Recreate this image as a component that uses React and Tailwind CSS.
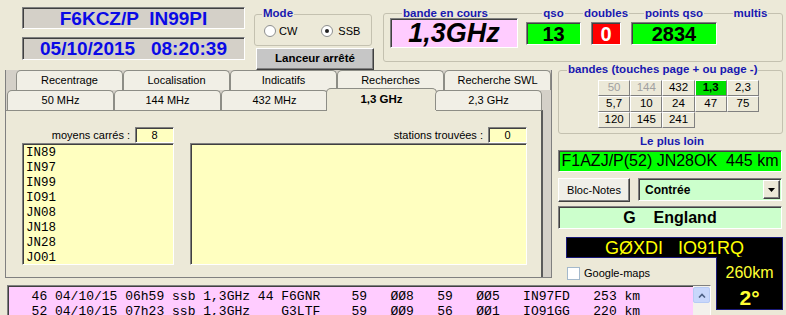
const sunken =
  'border border-t-[#808080] border-l-[#808080] border-b-white border-r-white shadow-[inset_1px_1px_0_#404040]';
const raised =
  'border border-t-white border-l-white border-b-[#404040] border-r-[#404040] shadow-[inset_-1px_-1px_0_#808080]';

const backTabs = ['Recentrage', 'Localisation', 'Indicatifs', 'Recherches', 'Recherche SWL'];
const frontTabs = ['50 MHz', '144 MHz', '432 MHz', '1,3 GHz', '2,3 GHz'];
const squares = ['IN89', 'IN97', 'IN99', 'IO91', 'JN08', 'JN18', 'JN28', 'JO01'];
const bands = [
  { l: '50', off: true },
  { l: '144', off: true },
  { l: '432' },
  { l: '1,3', on: true },
  { l: '2,3' },
  { l: '5,7' },
  { l: '10' },
  { l: '24' },
  { l: '47' },
  { l: '75' },
  { l: '120' },
  { l: '145' },
  { l: '241' },
];
const logRows = [
  '  46 04/10/15 06h59 ssb 1,3GHz 44 F6GNR    59   ØØ8   59   ØØ5   IN97FD   253 km',
  '  52 04/10/15 07h23 ssb 1,3GHz    G3LTF    59   ØØ9   56   ØØ1   IO91GG   220 km',
];

function Radio({ checked }) {
  return (
    <span className="w-[12px] h-[12px] rounded-full border border-[#8e8f8f] bg-white flex items-center justify-center">
      {checked && <span className="w-[4px] h-[4px] rounded-full bg-[#222]" />}
    </span>
  );
}

function Legend({ children, className = '' }) {
  return (
    <span
      className={`h-[10px] leading-[10px] -mt-[6px] px-[1px] bg-[#ECE9D8] text-[11.5px] font-bold text-[#1818b0] whitespace-nowrap ${className}`}
    >
      {children}
    </span>
  );
}

export default function App() {
  return (
    <div className="w-[786px] h-[315px] overflow-hidden bg-[#ECE9D8] text-black font-['Liberation_Sans',Arial,sans-serif] grid grid-cols-[555px_161px_70px] grid-rows-[62px_196px_27px_30px]">
      {/* top bar */}
      <div className="col-span-3 flex items-start">
        <div className="ml-[22px] mt-[7px] w-[223px] flex flex-col gap-[8px]">
          <div
            className={`h-[22px] bg-[#D4D0C8] ${sunken} flex items-center justify-center text-[19px] leading-none font-bold text-[#0a0ae6] whitespace-pre`}
          >
            F6KCZ/P  IN99PI
          </div>
          <div
            className={`h-[23px] bg-[#D4D0C8] ${sunken} flex items-center justify-center text-[19px] leading-none font-bold text-[#0a0ae6] whitespace-pre`}
          >
            05/10/2015   08:20:39
          </div>
        </div>

        <div className="ml-[9px] mt-[14px] w-[120px] flex flex-col">
          <div className="w-[118px] h-[32px] border border-[#c4c1b0] rounded-[3px] flex flex-col">
            <Legend className="ml-[7px] w-fit -mt-[7px]">Mode</Legend>
            <div className="mt-[5px] ml-[9px] flex items-center text-[11px]">
              <Radio />
              <span className="ml-[3px]">CW</span>
              <span className="ml-[24px]">
                <Radio checked />
              </span>
              <span className="ml-[5px]">SSB</span>
            </div>
          </div>
          <div
            className={`mt-[2px] ml-[2px] w-[118px] h-[22px] bg-[#c6c6c6] ${raised} flex items-center justify-center text-[11.5px] font-bold`}
          >
            Lanceur arrêté
          </div>
        </div>

        <div className="ml-[9px] mt-[13px] w-[400px] h-[49px] border border-[#c4c1b0] rounded-[3px] flex items-start">
          <div className="ml-[6px] w-[128px] flex flex-col">
            <Legend className="ml-[12px] w-fit">bande en cours</Legend>
            <div
              className={`h-[30px] bg-[#ffccff] ${sunken} flex items-center justify-center text-[27px] leading-none font-bold italic`}
            >
              1,3GHz
            </div>
          </div>
          <div className="ml-[8px] w-[55px] flex flex-col items-center">
            <Legend>qso</Legend>
            <div
              className={`mt-[4px] w-full h-[23px] bg-[#00ff00] ${sunken} flex items-center justify-center text-[20px] leading-none font-bold`}
            >
              13
            </div>
          </div>
          <div className="ml-[1px] w-[48px] flex flex-col items-center">
            <Legend>doubles</Legend>
            <div
              className={`mt-[4px] w-[30px] h-[23px] bg-[#ff0000] ${sunken} flex items-center justify-center text-[20px] leading-none font-bold text-white`}
            >
              0
            </div>
          </div>
          <div className="ml-[1px] w-[86px] flex flex-col items-center">
            <Legend>points qso</Legend>
            <div
              className={`mt-[4px] w-full h-[23px] bg-[#00ff00] ${sunken} flex items-center justify-center text-[20px] leading-none font-bold`}
            >
              2834
            </div>
          </div>
          <div className="ml-[16px] w-[35px] flex flex-col items-center">
            <Legend>multis</Legend>
          </div>
        </div>
      </div>

      {/* tab control */}
      <div className="row-span-2 pt-[8px] pl-[5px]">
        <div className="w-[547px] h-[208px] bg-[#D4D0C8] border-l border-r border-b border-[#808080] flex flex-col text-[11px]">
          <div className="flex pl-[10px] h-[20px]">
            {backTabs.map((t) => (
              <div
                key={t}
                className="w-[107px] h-[20px] rounded-t-[5px] border border-b-0 border-[#8d8d86] bg-[#f1efe6] flex items-center justify-center"
              >
                {t}
              </div>
            ))}
          </div>
          <div className="flex pl-[1px] h-[20px] relative z-10">
            {frontTabs.map((t, i) =>
              i === 3 ? (
                <div
                  key={t}
                  className="-mx-[2px] -mt-[2px] w-[111px] h-[23px] rounded-t-[5px] border border-b-0 border-[#8d8d86] bg-[#ECE9D8] flex items-center justify-center font-bold text-[11.5px]"
                >
                  {t}
                </div>
              ) : (
                <div
                  key={t}
                  className="w-[107px] h-[20px] rounded-t-[5px] border border-b-0 border-[#8d8d86] bg-[#f1efe6] flex items-center justify-center"
                >
                  {t}
                </div>
              ),
            )}
          </div>
          <div className="w-[537px] flex-1 bg-[#ECE9D8] border-t border-r-2 border-[#8d8d86] border-r-[#5a5a5a] flex items-start pt-[16px] pl-[16px]">
            <div className="w-[152px] flex flex-col">
              <div className="h-[16px] flex items-center justify-end">
                <span>moyens carrés :</span>
                <span className={`ml-[5px] w-[39px] h-[16px] bg-[#ffffc0] ${sunken} flex items-center justify-center`}>
                  8
                </span>
              </div>
              <div
                className={`h-[122px] bg-[#ffffc0] ${sunken} pt-[2px] pl-[3px] font-['Liberation_Mono',monospace] text-[12.5px] leading-[15px]`}
              >
                {squares.map((s) => (
                  <div key={s}>{s}</div>
                ))}
              </div>
            </div>
            <div className="ml-[16px] w-[337px] flex flex-col">
              <div className="h-[16px] flex items-center justify-end">
                <span>stations trouvées :</span>
                <span className={`ml-[5px] w-[39px] h-[16px] bg-[#ffffc0] ${sunken} flex items-center justify-center`}>
                  0
                </span>
              </div>
              <div className={`h-[122px] bg-[#ffffc0] ${sunken}`} />
            </div>
          </div>
        </div>
      </div>

      {/* right column */}
      <div className="col-span-2 flex flex-col pl-[3px]">
        <div className="mt-[8px] w-[225px] h-[64px] border border-[#c4c1b0] rounded-[3px] flex flex-col">
          <Legend className="ml-[8px] w-fit -mt-[7px]">bandes (touches page + ou page -)</Legend>
          <div className="mt-[6px] ml-[39px] w-[161px] grid grid-cols-5 text-[11.5px]">
            {bands.map((b) => (
              <div
                key={b.l}
                className={`h-[16px] border border-t-white border-l-white border-b-[#808080] border-r-[#808080] flex items-center justify-center ${
                  b.on ? 'bg-[#00e000] font-bold' : 'bg-[#ECE9D8]'
                } ${b.off ? 'text-[#a0a0a0]' : ''}`}
              >
                {b.l}
              </div>
            ))}
          </div>
        </div>
        <div className="h-[14px] leading-[14px] text-center text-[11.5px] font-bold text-[#1818b0]">Le plus loin</div>
        <div
          className={`mt-[2px] w-[224px] h-[22px] bg-[#00ff00] ${sunken} flex items-center justify-center text-[16px] leading-none whitespace-pre`}
        >
          F1AZJ/P(52) JN28OK  445 km
        </div>
        <div className="mt-[6px] flex items-start">
          <div
            className={`w-[72px] h-[24px] bg-[#f0efe8] ${raised} flex items-center justify-center text-[11px]`}
          >
            Bloc-Notes
          </div>
          <div className={`ml-[8px] w-[144px] h-[23px] bg-[#ccffcc] ${sunken} flex items-center`}>
            <span className="flex-1 pl-[6px] text-[12px] font-bold">Contrée</span>
            <span
              className={`mr-[1px] w-[17px] h-[19px] bg-[#ECE9D8] ${raised} flex items-center justify-center`}
            >
              <svg width="7" height="4" viewBox="0 0 7 4">
                <path d="M0 0h7L3.5 4z" fill="#000" />
              </svg>
            </span>
          </div>
        </div>
        <div
          className={`mt-[4px] w-[224px] h-[23px] bg-[#ccffcc] ${sunken} flex items-center justify-center text-[16px] leading-none font-bold whitespace-pre`}
        >
          G    England
        </div>
        <div className="mt-[8px] ml-[8px] w-[217px] h-[21px] bg-black border border-[#1a1a78] flex items-center justify-center text-[18px] leading-none text-[#ffff00] whitespace-pre">
          GØXDI   IO91RQ
        </div>
      </div>

      {/* google maps checkbox */}
      <div className="pl-[12px] pt-[9px] flex items-start text-[11px]">
        <span className="w-[13px] h-[13px] bg-white border border-[#1c5180]/40" />
        <span className="ml-[4px] leading-[13px]">Google-maps</span>
      </div>

      {/* distance / bearing */}
      <div className="row-span-2">
        <div className="-mt-[1px] w-[67px] h-[53px] bg-black border border-t-0 border-[#1a1a78] flex flex-col items-center text-[#ffff33]">
          <span className="mt-[8px] text-[16px] leading-none">260km</span>
          <span className="mt-[6px] text-[21px] leading-none font-bold">2°</span>
        </div>
      </div>

      {/* log */}
      <div className="col-span-2 row-start-4 pl-[7px]">
        <div className={`w-[704px] h-[40px] bg-[#ffccff] ${sunken} flex`}>
          <div className="flex-1 pt-[3px] pl-[8px] font-['Liberation_Mono',monospace] text-[13px] leading-[15px] whitespace-pre">
            {logRows.map((r) => (
              <div key={r}>{r}</div>
            ))}
          </div>
          <div className="w-[17px] bg-[#f3f1ec] flex flex-col">
            <div className="mt-[1px] h-[16px] rounded-[2px] border border-[#b7cbf5] bg-[#c8d7fb] flex items-center justify-center">
              <svg width="8" height="5" viewBox="0 0 8 5">
                <path d="M1 4.5L4 1.5L7 4.5" stroke="#4d6185" strokeWidth="1.6" fill="none" />
              </svg>
            </div>
          </div>
        </div>
      </div>
    </div>
  );
}
